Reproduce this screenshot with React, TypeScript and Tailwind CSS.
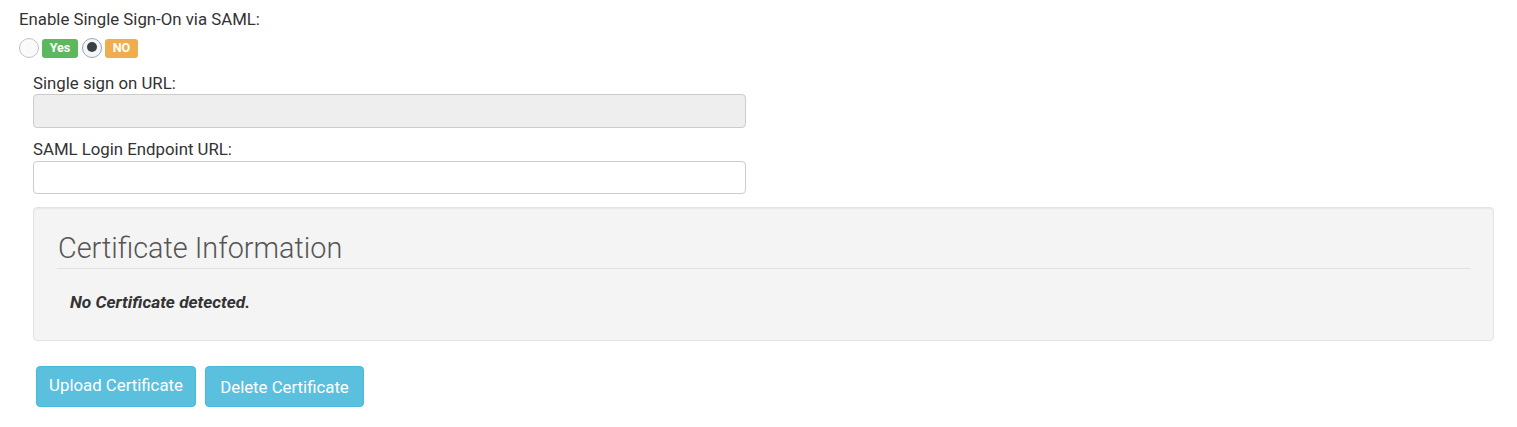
import React from "react";

export default function App() {
  return (
    <div className="w-[1517px] h-[427px] bg-white text-[#333] font-['Roboto',sans-serif] pl-[19px] pt-[9px]">
      <div className="text-[16.8px] leading-[20px] h-[20px]">Enable Single Sign-On via SAML:</div>
      <div className="mt-[9px] h-[20px] flex items-center">
        <span className="w-[20px] h-[20px] rounded-full border border-[#c4c4c4] bg-[#fafafa]" />
        <span className="ml-[3px] w-[36px] h-[19px] rounded-[3px] bg-[#5cb85c] text-white text-[12.6px] font-bold flex items-center justify-center">Yes</span>
        <span className="ml-[4px] w-[20px] h-[20px] rounded-full border border-[#9aa4b3] bg-[#f4f6f9] flex items-center justify-center">
          <span className="w-[10px] h-[10px] rounded-full bg-[#3a3f44] -mt-[2px] -ml-[1px]" />
        </span>
        <span className="ml-[3px] w-[33px] h-[19px] rounded-[3px] bg-[#f0ad4e] text-white text-[12.6px] font-bold flex items-center justify-center">NO</span>
      </div>
      <div className="ml-[14px] w-[713px]">
        <div className="mt-[15px] text-[16.8px] leading-[20px] h-[20px]">Single sign on URL:</div>
        <div className="mt-[1px] h-[34px] rounded-[4px] border border-[#ccc] bg-[#eee]" />
        <div className="mt-[11px] text-[16.8px] leading-[20px] h-[20px]">SAML Login Endpoint URL:</div>
        <div className="mt-[2px] h-[33px] rounded-[4px] border border-[#ccc] bg-white" />
      </div>
      <div className="ml-[14px] mt-[13px] w-[1461px] h-[134px] rounded-[4px] border border-[#e3e3e3] bg-[#f4f4f4] px-[23px] pt-[22px] shadow-[inset_0_1px_1px_rgba(0,0,0,0.05)]">
        <div className="h-[36px] text-[28.8px] leading-[36px] font-light text-[#555] pl-[1px] whitespace-nowrap">Certificate Information</div>
        <div className="mt-[2px] h-px bg-[#e1e1e1]" />
        <div className="mt-[23px] pl-[13px] text-[17.3px] leading-[20px] font-bold italic text-[#333]">No Certificate detected.</div>
      </div>
      <div className="ml-[17px] mt-[25px] flex gap-[9px]">
        <button className="w-[160px] h-[41px] rounded-[4px] border border-[#46b8da] bg-[#5bc0de] text-white text-[16.8px] leading-[20px] pb-[3px] whitespace-nowrap">Upload Certificate</button>
        <button className="w-[159px] h-[41px] rounded-[4px] border border-[#46b8da] bg-[#5bc0de] text-white text-[16.8px] leading-[20px] whitespace-nowrap">Delete Certificate</button>
      </div>
    </div>
  );
}
